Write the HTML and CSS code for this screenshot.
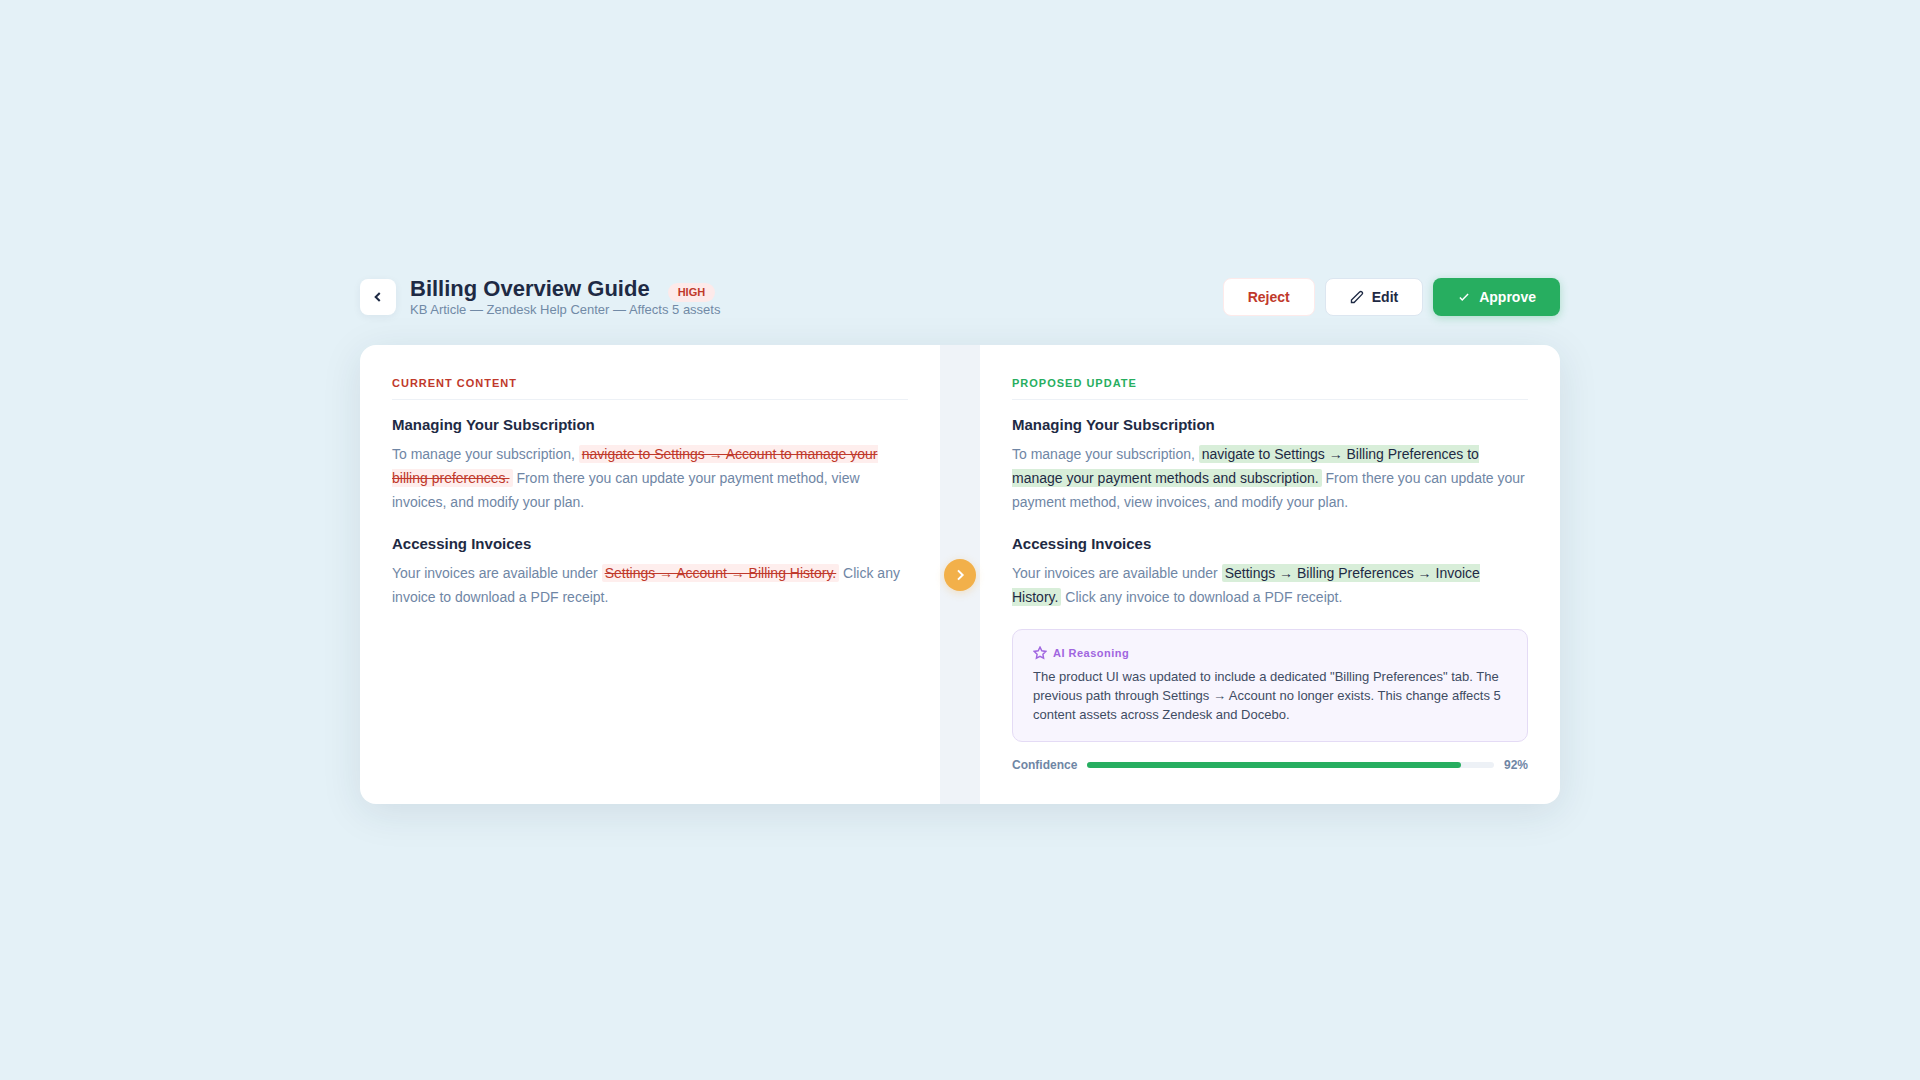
FILE: index.html
```html
<!DOCTYPE html>
<html lang="en">
<head>
<meta charset="utf-8">
<meta name="viewport" content="width=device-width, initial-scale=1">
<title>Billing Overview Guide</title>
<link rel="stylesheet" href="styles.css">
</head>
<body>
<main class="review">
  <header class="review-header">
    <button class="back" type="button" aria-label="Back">
      <svg width="14" height="14" viewBox="0 0 24 24" fill="none" stroke="currentColor" stroke-width="3.5"><path d="M15 19l-7-7 7-7"/></svg>
    </button>
    <div class="heading">
      <div class="title-row">
        <h1 class="title">Billing Overview Guide</h1>
        <span class="badge">HIGH</span>
      </div>
      <p class="subtitle">KB Article — Zendesk Help Center — Affects 5 assets</p>
    </div>
    <div class="actions">
      <button class="btn btn-reject" type="button">Reject</button>
      <button class="btn btn-edit" type="button">
        <svg width="14" height="14" viewBox="0 0 24 24" fill="none" stroke="currentColor" stroke-width="2.3"><path d="M16.500 3.500a2.828 2.828 0 0 1 4 4L7 21.500H2.500V17L16.500 3.500z"/></svg>
        Edit
      </button>
      <button class="btn btn-approve" type="button">
        <svg width="14" height="14" viewBox="0 0 24 24" fill="none" stroke="currentColor" stroke-width="2.5"><path d="M5 13l4 4L19 7"/></svg>
        Approve
      </button>
    </div>
  </header>

  <div class="diff">
    <section class="pane">
      <h2 class="label label-current">CURRENT CONTENT</h2>
      <h3 class="topic">Managing Your Subscription</h3>
      <p class="copy">To manage your subscription, <del class="removed">navigate to Settings → Account to manage your billing preferences.</del> From there you can update your payment method, view invoices, and modify your plan.</p>
      <h3 class="topic">Accessing Invoices</h3>
      <p class="copy">Your invoices are available under <del class="removed">Settings → Account → Billing History.</del> Click any invoice to download a PDF receipt.</p>
    </section>

    <div class="divider">
      <span class="arrow">
        <svg width="16" height="16" viewBox="0 0 24 24" fill="none" stroke="currentColor" stroke-width="3"><path d="M9 5l7 7-7 7"/></svg>
      </span>
    </div>

    <section class="pane">
      <h2 class="label label-proposed">PROPOSED UPDATE</h2>
      <h3 class="topic">Managing Your Subscription</h3>
      <p class="copy">To manage your subscription, <ins class="added">navigate to Settings → Billing Preferences to manage your payment methods and subscription.</ins> From there you can update your payment method, view invoices, and modify your plan.</p>
      <h3 class="topic">Accessing Invoices</h3>
      <p class="copy">Your invoices are available under <ins class="added">Settings → Billing Preferences → Invoice History.</ins> Click any invoice to download a PDF receipt.</p>
      <aside class="reasoning">
        <h4 class="reasoning-title">
          <svg width="14" height="14" viewBox="0 0 24 24" fill="none" stroke="currentColor" stroke-width="2.5"><path d="M12 2l3.090 6.260L22 9.270l-5 4.870 1.180 6.880L12 17.770l-6.180 3.250L7 14.140 2 9.270l6.910-1.010L12 2z"/></svg>
          AI Reasoning
        </h4>
        <p class="reasoning-text">The product UI was updated to include a dedicated "Billing Preferences" tab. The previous path through Settings → Account no longer exists. This change affects 5 content assets across Zendesk and Docebo.</p>
      </aside>
      <div class="confidence">
        <span>Confidence</span>
        <div class="track"><div class="fill" style="width: 92%"></div></div>
        <span>92%</span>
      </div>
    </section>
  </div>
</main>
</body>
</html>
```
FILE: styles.css
```css
* {
  box-sizing: border-box;
  margin: 0;
  padding: 0;
}

body {
  min-height: 100vh;
  display: flex;
  align-items: center;
  justify-content: center;
  background: #e4f1f7;
  color: #1e2a44;
  font-family: "Liberation Sans", Arial, sans-serif;
}

.review {
  width: 100%;
  max-width: 1200px;
}

.review-header {
  display: flex;
  align-items: center;
  gap: 14px;
  margin-bottom: 28px;
}

.back {
  display: flex;
  align-items: center;
  justify-content: center;
  width: 36px;
  height: 36px;
  border: 0;
  border-radius: 8px;
  background: #fff;
  color: inherit;
  box-shadow: 0 2px 8px rgba(26, 39, 68, 0.06);
}

.title-row {
  display: flex;
  align-items: flex-end;
  gap: 18px;
}

.title {
  font-size: 22px;
  line-height: 26px;
}

.badge {
  padding: 3px 10px;
  border-radius: 10px;
  background: #fdeaea;
  color: #c0392b;
  font-size: 11px;
  font-weight: 700;
  line-height: 13px;
}

.subtitle {
  color: #718aa6;
  font-size: 13px;
  line-height: 15px;
}

.actions {
  display: flex;
  gap: 10px;
  margin-left: auto;
}

.btn {
  display: flex;
  align-items: center;
  gap: 8px;
  height: 38px;
  padding: 0 24px;
  border: 0;
  border-radius: 8px;
  background: #fff;
  font: 700 14px/16px "Liberation Sans", Arial, sans-serif;
}

.btn-reject {
  border: 1px solid #fdeaea;
  color: #c0392b;
}

.btn-edit {
  border: 1px solid #dce6f0;
  color: #1e2a44;
}

.btn-approve {
  background: #27ae60;
  color: #fff;
  box-shadow: 0 2px 8px rgba(39, 174, 96, 0.3);
}

.diff {
  display: grid;
  grid-template-columns: 1fr 40px 1fr;
  overflow: hidden;
  border-radius: 16px;
  background: #fff;
  box-shadow: 0 8px 40px rgba(26, 50, 68, 0.1);
}

.pane {
  padding: 32px;
}

.label {
  margin-bottom: 16px;
  padding-bottom: 10px;
  border-bottom: 1px solid #edf1f6;
  font-size: 11px;
  line-height: 12px;
  letter-spacing: 1px;
}

.label-current {
  color: #c0392b;
}

.label-proposed {
  color: #27ae60;
}

.topic {
  margin-bottom: 9px;
  font-size: 15px;
  line-height: 17px;
}

.copy {
  margin-bottom: 21px;
  color: #6f86a5;
  font-size: 14px;
  line-height: 24px;
}

.copy:last-of-type {
  margin-bottom: 20px;
}

.removed,
.added {
  padding: 1px 3px;
  border-radius: 2px;
}

.removed {
  background: #feeeed;
  color: #c0392b;
}

.added {
  background: #d8eed9;
  color: #1e2a44;
  text-decoration: none;
}

.divider {
  display: flex;
  align-items: center;
  justify-content: center;
  background: #eff3f8;
}

.arrow {
  display: flex;
  align-items: center;
  justify-content: center;
  width: 32px;
  height: 32px;
  border-radius: 50%;
  background: #f2b04a;
  color: #fff;
  box-shadow: 0 2px 8px rgba(242, 176, 74, 0.3);
}

.reasoning {
  margin-bottom: 16px;
  padding: 16px 20px 17px;
  border: 1px solid #e4dbf5;
  border-radius: 10px;
  background: #f8f5fe;
}

.reasoning-title {
  display: flex;
  align-items: center;
  gap: 6px;
  margin-bottom: 7px;
  color: #a066e0;
  font-size: 11px;
  line-height: 14px;
  letter-spacing: 0.5px;
}

.reasoning-text {
  color: #3f4c63;
  font-size: 13px;
  line-height: 19px;
}

.confidence {
  display: flex;
  align-items: center;
  gap: 10px;
  color: #6f86a5;
  font-size: 12px;
  font-weight: 700;
  line-height: 14px;
}

.track {
  flex: 1;
  height: 6px;
  border-radius: 3px;
  background: #edf1f6;
}

.fill {
  height: 100%;
  border-radius: 3px;
  background: #27ae60;
}
```
